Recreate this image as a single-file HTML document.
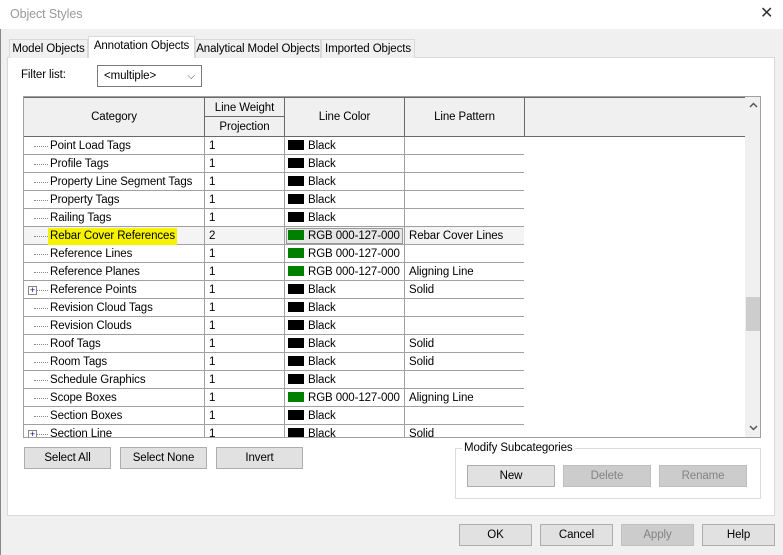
<!DOCTYPE html>
<html><head><style>
*{margin:0;padding:0;box-sizing:border-box}
body{width:783px;height:555px;background:#f0f0f0;font:11.5px "Liberation Sans",sans-serif;color:#000;position:relative;overflow:hidden;letter-spacing:-0.1px}
.a{position:absolute}
.btn{position:absolute;background:#e1e1e1;border:1px solid #adadad;text-align:center;line-height:21px}
.dis{background:#cccccc;border-color:#bfbfbf;color:#838383}
.tab{position:absolute;top:39px;height:19px;border:1px solid #d9d9d9;border-bottom:none;background:#f0f0f0;text-align:center;line-height:18px;white-space:nowrap}
.row{position:absolute;left:0;width:500px;height:18px;border-bottom:1px solid #a0a0a0;background:#fff}
.row div{position:absolute;top:0;height:17px;line-height:19px;white-space:nowrap}
.c1{left:26px}.c2{left:185px}.c3{left:264px}.c4{left:385px}
.v{position:absolute;top:0;width:1px;height:18px;background:#a0a0a0}
.sw{display:inline-block;width:16px;height:10px;vertical-align:-1px;margin-right:4px}
.row .dot{position:absolute;left:10px;top:9px;width:14px;height:1px;border-top:1px dotted #888}
</style></head><body>
<div class="a" style="left:0;top:0;width:783px;height:29px;background:#fff"></div>
<div class="a" style="left:10px;top:7px;font-size:12.5px;color:#999">Object Styles</div>
<div class="a" style="left:760px;top:3px;font-size:16px;color:#333">✕</div>
<div class="a" style="left:0;top:29px;width:1px;height:526px;background:#888"></div>
<div class="a" style="left:7px;top:57px;width:768px;height:459px;background:#fff;border:1px solid #d9d9d9"></div>
<div class="tab" style="left:9px;width:79px;line-height:19px">Model Objects</div>
<div class="tab" style="left:88px;width:107px;top:36px;height:22px;background:#fff;z-index:2;line-height:19px">Annotation Objects</div>
<div class="tab" style="left:195px;width:126px;line-height:19px">Analytical Model Objects</div>
<div class="tab" style="left:321px;width:94px;line-height:19px">Imported Objects</div>
<div class="a" style="left:21px;top:69px">Filter list:</div>
<div class="a" style="left:97px;top:65px;width:105px;height:22px;border:1px solid #7a7a7a;background:#fff;padding-left:6px;line-height:21px">&lt;multiple&gt;<span style="position:absolute;right:6px;top:0;font-size:10px;color:#444">⌵</span></div>
<div class="a" style="left:23px;top:96px;width:738px;height:342px;border:1px solid #a0a0a0;background:#fff;overflow:hidden">
<div class="a" style="left:0;top:0;width:721px;height:40px;background:#f0f0f0;border-bottom:1px solid #696969;border-top:1px solid #696969"></div>
<div class="a" style="left:0;top:0;width:181px;height:40px;line-height:41px;text-align:center;border-right:1px solid #696969">Category</div>
<div class="a" style="left:181px;top:0;width:80px;height:20px;line-height:21px;text-align:center;border-right:1px solid #696969;border-bottom:1px solid #696969;border-top:1px solid #696969">Line Weight</div>
<div class="a" style="left:181px;top:20px;width:80px;height:20px;line-height:20px;text-align:center;border-right:1px solid #696969">Projection</div>
<div class="a" style="left:261px;top:0;width:120px;height:40px;line-height:41px;text-align:center;border-right:1px solid #696969">Line Color</div>
<div class="a" style="left:381px;top:0;width:120px;height:40px;line-height:41px;text-align:center;border-right:1px solid #696969">Line Pattern</div>
<div class="a" style="left:721px;top:0;width:16px;height:340px;background:#f0f0f0"></div>
<svg class="a" style="left:725px;top:5px" width="9" height="6"><path d="M1 5L4.5 1.5L8 5" stroke="#555" stroke-width="1.5" fill="none"/></svg>
<svg class="a" style="left:725px;top:328px" width="9" height="6"><path d="M1 1L4.5 4.5L8 1" stroke="#555" stroke-width="1.5" fill="none"/></svg>
<div class="a" style="left:722px;top:200px;width:15px;height:34px;background:#cdcdcd"></div>
<div class="a" style="left:9px;top:40px;height:300px;border-left:1px dotted #888"></div>
</div>
<div id="rows"></div>
<div class="btn" style="left:24px;top:447px;width:87px;height:22px">Select All</div>
<div class="btn" style="left:120px;top:447px;width:87px;height:22px">Select None</div>
<div class="btn" style="left:216px;top:447px;width:87px;height:22px">Invert</div>
<div class="a" style="left:455px;top:448px;width:306px;height:51px;border:1px solid #dcdcdc"></div>
<div class="a" style="left:462px;top:442px;background:#fff;padding:0 2px">Modify Subcategories</div>
<div class="btn" style="left:467px;top:465px;width:88px;height:22px">New</div>
<div class="btn dis" style="left:563px;top:465px;width:88px;height:22px">Delete</div>
<div class="btn dis" style="left:659px;top:465px;width:88px;height:22px">Rename</div>
<div class="btn" style="left:459px;top:524px;width:73px;height:22px">OK</div>
<div class="btn" style="left:540px;top:524px;width:73px;height:22px">Cancel</div>
<div class="btn dis" style="left:621px;top:524px;width:73px;height:22px">Apply</div>
<div class="btn" style="left:702px;top:524px;width:73px;height:22px">Help</div>
<script>
var d=[["Point Load Tags",1,0,""],["Profile Tags",1,0,""],["Property Line Segment Tags",1,0,""],["Property Tags",1,0,""],["Railing Tags",1,0,""],["Rebar Cover References",2,1,"Rebar Cover Lines"],["Reference Lines",1,1,""],["Reference Planes",1,1,"Aligning Line"],["Reference Points",1,0,"Solid"],["Revision Cloud Tags",1,0,""],["Revision Clouds",1,0,""],["Roof Tags",1,0,"Solid"],["Room Tags",1,0,"Solid"],["Schedule Graphics",1,0,""],["Scope Boxes",1,1,"Aligning Line"],["Section Boxes",1,0,""],["Section Line",1,0,"Solid"]];
var h='<div class="a" style="left:24px;top:137px;width:500px;height:300px;overflow:hidden">';
d.forEach(function(r,i){var sel=i==5;
h+='<div class="row" style="top:'+(18*i)+'px;'+(sel?'background:#f4f4f4':'')+'">'+
'<div class="dot"></div>'+(i==8||i==16?'<div style="left:4px;top:5px;width:9px;height:9px;border:1px solid #888;background:#fff;font-size:9px;line-height:7px;text-align:center;color:#00a">+</div>':'')+
'<div class="c1"'+(sel?' style="background:#f7f300;padding:0 2px;left:24px;top:1px;line-height:17px"':'')+'>'+r[0]+'</div>'+
'<div class="v" style="left:180px"></div><div class="c2">'+r[1]+'</div>'+
'<div class="v" style="left:260px"></div><div class="c3"'+(sel?' style="left:262px;top:1px;width:117px;border:1px solid #999;background:#e6e6e6;padding-left:1px;height:16px;line-height:15px"':'')+'><span class="sw" style="background:'+(r[2]?'#007f00':'#000')+'"></span>'+(r[2]?'RGB 000-127-000':'Black')+'</div>'+
'<div class="v" style="left:380px"></div><div class="c4">'+r[3]+'</div><div class="v" style="left:500px"></div></div>';});
document.getElementById('rows').outerHTML=h+'</div>';
</script>
</body></html>
